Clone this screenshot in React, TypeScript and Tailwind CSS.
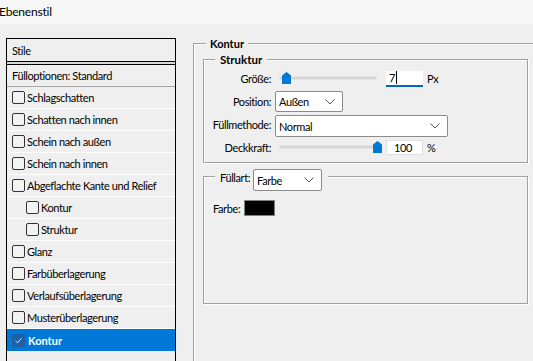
import React from "react";

function Check({ checked = false }: { checked?: boolean }) {
  if (checked) {
    return (
      <span className="flex h-[13px] w-[13px] shrink-0 items-center justify-center rounded-[2px] bg-[#1e5fa6]">
        <svg width="9" height="9" viewBox="0 0 9 9">
          <path d="M1.5 4.8 L3.6 6.8 L7.6 2.2" fill="none" stroke="#cfe3f7" strokeWidth="1" />
        </svg>
      </span>
    );
  }
  return <span className="block h-[13px] w-[13px] shrink-0 rounded-[2px] border border-[#333333] bg-[#f3f3f3]" />;
}

function Row({ label, indent = false }: { label: string; indent?: boolean }) {
  return (
    <div className={`flex h-[22px] items-center border-b border-white ${indent ? "pl-[19px]" : "pl-[5px]"}`}>
      <Check />
      <span className="ml-[2px] whitespace-nowrap leading-none">{label}</span>
    </div>
  );
}

function Chevron() {
  return (
    <svg width="10" height="6" viewBox="0 0 10 6" className="shrink-0">
      <path d="M0.5 0.5 L5 5 L9.5 0.5" fill="none" stroke="#555" strokeWidth="1" />
    </svg>
  );
}

function Select({ value, size }: { value: string; size: string }) {
  return (
    <div className={`flex items-center justify-between rounded-[2px] border border-[#8a8a8a] bg-white pl-[3px] pr-[7px] ${size}`}>
      <span className="leading-none">{value}</span>
      <Chevron />
    </div>
  );
}

function Slider({ thumb }: { thumb: string }) {
  return (
    <div className="relative h-[15px] w-[108px]">
      <div className="absolute left-[4px] right-[6px] top-[5px] h-[4px] border border-[#e4e4e4] bg-[#d6d6d6]" />
      <svg className={`absolute top-[1px] ${thumb}`} width="9" height="12" viewBox="0 0 9 12">
        <path d="M0 3.5 L4.5 0 L9 3.5 L9 12 L0 12 Z" fill="#0078d7" />
      </svg>
    </div>
  );
}

const etched = "border border-[#a0a0a0] shadow-[1px_1px_0_#ffffff,inset_1px_1px_0_#ffffff]";

export default function App() {
  return (
    <div className="h-[361px] w-[533px] overflow-hidden bg-[#efefef] font-['Lato','Noto_Sans',sans-serif] text-[11px] tracking-[-0.4px] text-black">
      <div className="flex h-[24px] items-center bg-[#f7f7f7] text-[12px] tracking-[-0.2px]">
        <span className="-ml-[1px] leading-none">Ebenenstil</span>
      </div>
      <div className="flex">
        {/* left list */}
        <div className="ml-[6px] mt-[14px] h-[340px] w-[170px] shrink-0 border border-black">
          <div className="flex h-[22px] items-center pl-[5px] leading-none">Stile</div>
          <div className="h-[4px] border-y border-black bg-[#d8d8d8]" />
          <div className="flex h-[22px] items-center border-b border-[#a8a8a8] pl-[5px] leading-none">
            Fülloptionen: Standard
          </div>
          <Row label="Schlagschatten" />
          <Row label="Schatten nach innen" />
          <Row label="Schein nach außen" />
          <Row label="Schein nach innen" />
          <Row label="Abgeflachte Kante und Relief" />
          <Row label="Kontur" indent />
          <Row label="Struktur" indent />
          <Row label="Glanz" />
          <Row label="Farbüberlagerung" />
          <Row label="Verlaufsüberlagerung" />
          <Row label="Musterüberlagerung" />
          <div className="flex h-[22px] items-center bg-[#0078d7] pl-[5px]">
            <Check checked />
            <span className="ml-[3px] font-bold leading-none tracking-normal text-white">Kontur</span>
          </div>
        </div>

        {/* right side */}
        <div className={`relative ml-[17px] mt-[19px] h-[340px] w-[360px] shrink-0 ${etched} pl-[9px] pt-[15px]`}>
          <div className="absolute -top-[8px] left-[12px] bg-[#efefef] px-[4px] font-bold leading-[16px] tracking-normal">
            Kontur
          </div>

          {/* Struktur group */}
          <div className={`relative h-[104px] w-[325px] ${etched} pt-[10px]`}>
            <div className="absolute -top-[8px] left-[11px] bg-[#efefef] px-[5px] text-[11.5px] font-bold leading-[16px] tracking-normal">
              Struktur
            </div>
            <div className="flex h-[17px] items-center">
              <span className="w-[67px] whitespace-nowrap text-right leading-none">Größe:</span>
              <div className="ml-[4px]">
                <Slider thumb="left-[7px]" />
              </div>
              <div className="ml-[3px] flex h-[16px] w-[37px] items-center border-b-2 border-[#0067c0] bg-white pl-[3px] leading-none">
                7<span className="ml-[1px] inline-block h-[13px] w-[1px] bg-black" />
              </div>
              <span className="ml-[4px] leading-none">Px</span>
            </div>
            <div className="mt-[4px] flex h-[21px] items-center">
              <span className="w-[67px] whitespace-nowrap text-right leading-none">Position:</span>
              <div className="ml-[4px]">
                <Select value="Außen" size="h-[21px] w-[68px]" />
              </div>
            </div>
            <div className="mt-[3px] flex h-[22px] items-center">
              <span className="-mt-[3px] w-[67px] whitespace-nowrap text-right leading-none">Füllmethode:</span>
              <div className="ml-[4px]">
                <Select value="Normal" size="h-[22px] w-[173px]" />
              </div>
            </div>
            <div className="mt-[3px] flex h-[15px] items-center">
              <span className="w-[67px] whitespace-nowrap text-right leading-none">Deckkraft:</span>
              <div className="ml-[4px]">
                <Slider thumb="left-[98px]" />
              </div>
              <div className="ml-[3px] flex h-[15px] w-[37px] items-center border border-[#e0e0e0] bg-white pl-[7px] leading-none">
                100
              </div>
              <span className="ml-[4px] leading-none">%</span>
            </div>
          </div>

          {/* Füllart group */}
          <div className={`relative mt-[13px] h-[128px] w-[325px] ${etched} pl-[9px] pt-[23px]`}>
            <div className="absolute -top-[8px] left-[11px] flex items-center bg-[#efefef] pl-[5px] pr-[6px]">
              <span className="-mt-[6px] leading-none">Füllart:</span>
              <div className="ml-[3px]">
                <Select value="Farbe" size="h-[22px] w-[69px]" />
              </div>
            </div>
            <div className="flex h-[16px] items-center">
              <span className="leading-none">Farbe:</span>
              <span className="ml-[4px] block h-[16px] w-[31px] border border-[#808080] bg-black" />
            </div>
          </div>
        </div>
      </div>
    </div>
  );
}
